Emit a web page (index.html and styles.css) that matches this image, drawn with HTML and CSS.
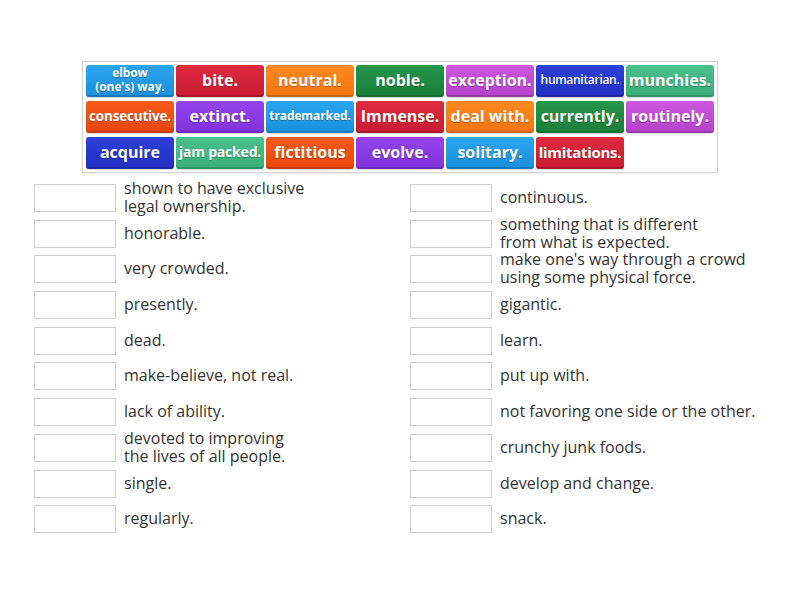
FILE: index.html
```html
<!DOCTYPE html>
<html>
<head>
<meta charset="utf-8">
<link rel="stylesheet" href="styles.css">
</head>
<body>
<div class="page">
  <div class="bank">
    <div class="tile c-lblue t-xs">elbow<br>(one's) way.</div>
    <div class="tile c-red">bite.</div>
    <div class="tile c-orange">neutral.</div>
    <div class="tile c-green">noble.</div>
    <div class="tile c-magenta">exception.</div>
    <div class="tile c-dblue t-xxs">humanitarian.</div>
    <div class="tile c-teal">munchies.</div>
    <div class="tile c-ored t-sm">consecutive.</div>
    <div class="tile c-purple">extinct.</div>
    <div class="tile c-lblue t-xs">trademarked.</div>
    <div class="tile c-red">Immense.</div>
    <div class="tile c-orange">deal with.</div>
    <div class="tile c-green">currently.</div>
    <div class="tile c-magenta">routinely.</div>
    <div class="tile c-dblue">acquire</div>
    <div class="tile c-teal t-jp">jam packed.</div>
    <div class="tile c-ored">fictitious</div>
    <div class="tile c-purple">evolve.</div>
    <div class="tile c-lblue">solitary.</div>
    <div class="tile c-red t-md">limitations.</div>
  </div>

  <div class="answers">
    <div class="col">
      <div class="row"><div class="box"></div><div class="txt">shown to have exclusive<br>legal ownership.</div></div>
      <div class="row"><div class="box"></div><div class="txt">honorable.</div></div>
      <div class="row"><div class="box"></div><div class="txt">very crowded.</div></div>
      <div class="row"><div class="box"></div><div class="txt">presently.</div></div>
      <div class="row"><div class="box"></div><div class="txt">dead.</div></div>
      <div class="row"><div class="box"></div><div class="txt">make-believe, not real.</div></div>
      <div class="row"><div class="box"></div><div class="txt">lack of ability.</div></div>
      <div class="row"><div class="box"></div><div class="txt">devoted to improving<br>the lives of all people.</div></div>
      <div class="row"><div class="box"></div><div class="txt">single.</div></div>
      <div class="row"><div class="box"></div><div class="txt">regularly.</div></div>
    </div>
    <div class="col">
      <div class="row"><div class="box"></div><div class="txt">continuous.</div></div>
      <div class="row"><div class="box"></div><div class="txt">something that is different<br>from what is expected.</div></div>
      <div class="row"><div class="box"></div><div class="txt">make one's way through a crowd<br>using some physical force.</div></div>
      <div class="row"><div class="box"></div><div class="txt">gigantic.</div></div>
      <div class="row"><div class="box"></div><div class="txt">learn.</div></div>
      <div class="row"><div class="box"></div><div class="txt">put up with.</div></div>
      <div class="row"><div class="box"></div><div class="txt">not favoring one side or the other.</div></div>
      <div class="row"><div class="box"></div><div class="txt">crunchy junk foods.</div></div>
      <div class="row"><div class="box"></div><div class="txt">develop and change.</div></div>
      <div class="row"><div class="box"></div><div class="txt">snack.</div></div>
    </div>
  </div>
</div>
</body>
</html>
```

FILE: styles.css
```css
html, body {
  margin: 0;
  padding: 0;
  background: #ffffff;
}

body {
  font-family: "Open Sans", "Noto Sans", sans-serif;
  color: #333333;
}

.page {
  width: 800px;
  height: 600px;
  padding-top: 61px;
  box-sizing: border-box;
}

.bank {
  margin-left: 82px;
  width: 636px;
  height: 112px;
  box-sizing: border-box;
  border: 1px solid #d4d4d4;
  padding: 3px;
  display: grid;
  grid-template-columns: repeat(7, 88px);
  grid-auto-rows: 32px;
  gap: 4px 2px;
  box-shadow: 0 1px 2px rgba(0, 0, 0, 0.08);
}

.tile {
  border-radius: 3px;
  color: #ffffff;
  font-weight: 700;
  font-size: 16px;
  line-height: 18px;
  padding-bottom: 2px;
  box-sizing: border-box;
  display: flex;
  align-items: center;
  justify-content: center;
  text-align: center;
  white-space: nowrap;
  text-shadow: 0 1px 1px rgba(0, 0, 0, 0.25);
  box-shadow: inset 0 -2px 0 rgba(0, 0, 0, 0.15), 0 1px 1px rgba(0, 0, 0, 0.15);
  overflow: hidden;
}

.t-md { font-size: 15px; letter-spacing: -0.3px; }
.t-sm { font-size: 13.5px; letter-spacing: -0.2px; }
.t-jp { font-size: 14px; letter-spacing: -0.2px; }
.t-xs { font-size: 12px; line-height: 14px; letter-spacing: -0.1px; }
.t-xxs { font-size: 12px; letter-spacing: -0.3px; font-weight: 600; }

.c-lblue   { background: linear-gradient(#2aa5f0, #1a8fdc); }
.c-red     { background: linear-gradient(#df2a40, #c81b31); }
.c-orange  { background: linear-gradient(#fd8a1e, #f27410); }
.c-green   { background: linear-gradient(#24964a, #1a7f39); }
.c-magenta { background: linear-gradient(#cc58df, #b642cc); }
.c-dblue   { background: linear-gradient(#2e40d8, #2230c2); }
.c-teal    { background: linear-gradient(#4cc08c, #3aae78); }
.c-ored    { background: linear-gradient(#f65a18, #e8460c); }
.c-purple  { background: linear-gradient(#9443ec, #8032dc); }

.answers {
  margin-top: 11px;
  margin-left: 34px;
  display: grid;
  grid-template-columns: 376px 376px;
}

.col {
  display: flex;
  flex-direction: column;
  gap: 7.7px;
}

.row {
  height: 28px;
  display: flex;
  align-items: center;
  gap: 8px;
}

.box {
  width: 82px;
  height: 28px;
  box-sizing: border-box;
  border: 1px solid #cfcfcf;
  background: #ffffff;
  flex: none;
}

.txt {
  font-size: 16px;
  line-height: 18px;
  color: #333333;
  white-space: nowrap;
  margin-top: -2px;
}
```
